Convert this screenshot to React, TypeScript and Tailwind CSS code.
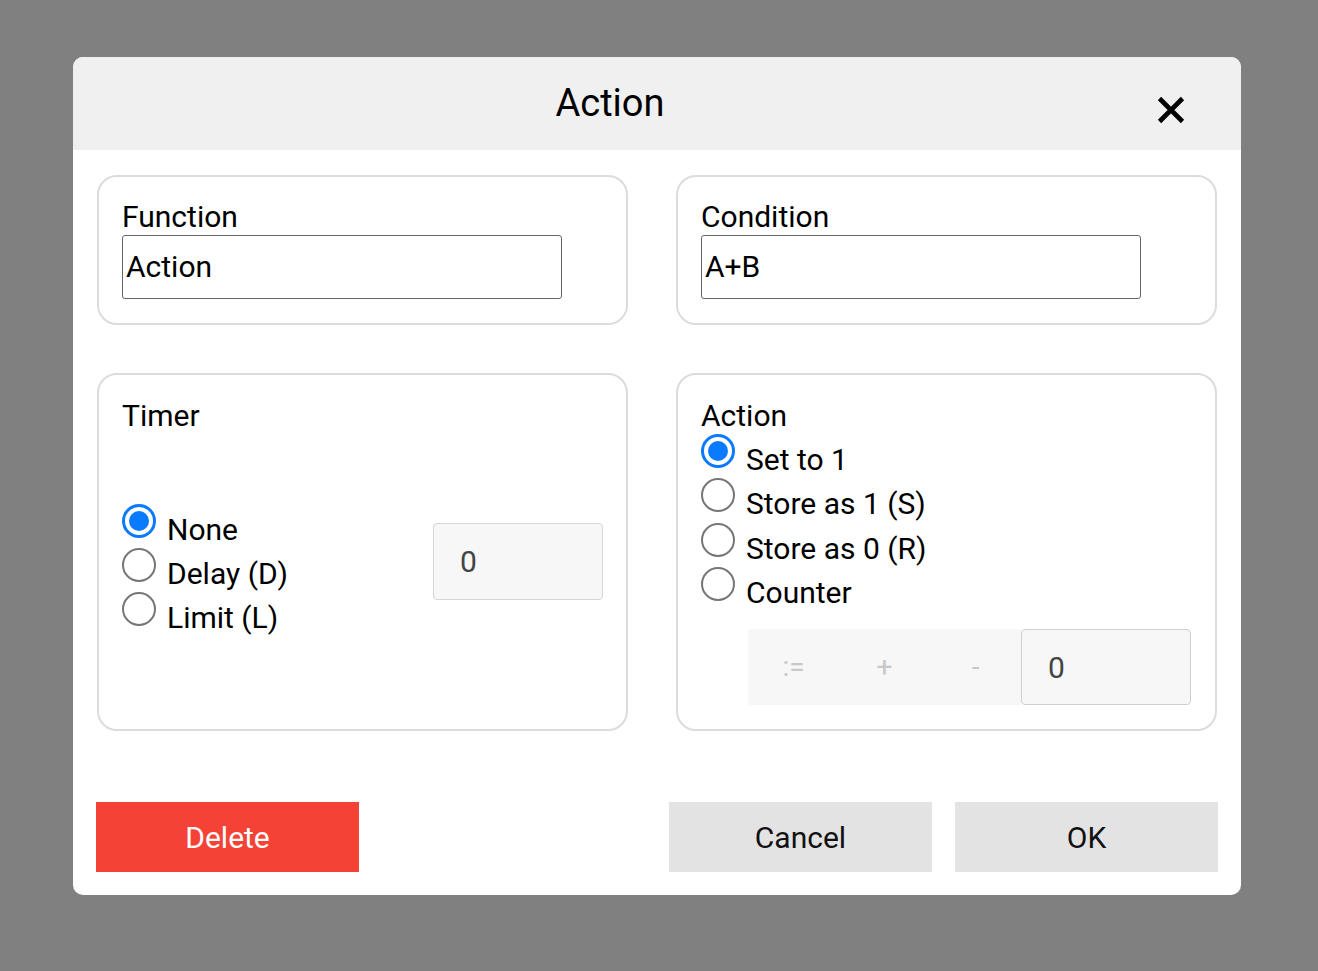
import React from 'react'

function Radio({ checked }: { checked?: boolean }) {
  if (checked) {
    return (
      <span className="w-[34px] h-[34px] rounded-full border-[3px] border-[#0a7aff] bg-white flex items-center justify-center shrink-0">
        <span className="w-[20px] h-[20px] rounded-full bg-[#0a7aff]" />
      </span>
    )
  }
  return <span className="w-[34px] h-[34px] rounded-full border-2 border-[#767676] bg-white shrink-0" />
}

function Option({ label, checked }: { label: string; checked?: boolean }) {
  return (
    <div className="flex items-start h-[44.3px]">
      <Radio checked={checked} />
      <span className="ml-[11px] pt-[8px] text-[30px] leading-[36px] text-black whitespace-nowrap">{label}</span>
    </div>
  )
}

function TextField({ label, value }: { label: string; value: string }) {
  return (
    <div className="h-[150px] border-2 border-[#dcdcdc] rounded-[20px] pt-[22px] pl-[23px]">
      <div className="text-[30px] leading-[36px] text-black">{label}</div>
      <div className="w-[440px] h-[64px] border-[1.5px] border-[#666666] rounded-[3px] flex items-center pl-[3px] text-[30px] leading-[36px] text-black">
        {value}
      </div>
    </div>
  )
}

export default function App() {
  return (
    <div className="min-h-screen bg-[#808080] pl-[73px] pt-[57px] font-['Roboto',sans-serif]">
      <div className="w-[1168px] h-[838px] bg-white rounded-[10px] overflow-hidden flex flex-col">
        {/* Header */}
        <div className="h-[93px] bg-[#f0f0f0] flex items-center shrink-0">
          <div className="w-[1074px] text-center text-[38px] leading-[44px] text-black -mt-[2px]">Action</div>
          <button className="ml-[10px] mt-[12px] w-[28px] h-[28px]">
            <svg viewBox="0 0 28 28" width="28" height="28">
              <path d="M2.5 2.5 L25.5 25.5 M25.5 2.5 L2.5 25.5" stroke="#000" strokeWidth="4.6" strokeLinecap="butt" />
            </svg>
          </button>
        </div>

        {/* Body */}
        <div className="px-[24px] pt-[25px] grid grid-cols-[531px_541px] gap-x-[48px] gap-y-[48px]">
          <TextField label="Function" value="Action" />
          <TextField label="Condition" value="A+B" />

          {/* Timer */}
          <div className="h-[358px] border-2 border-[#dcdcdc] rounded-[20px] pl-[23px] pr-[23px] pt-[23px] pb-[23px] flex flex-col">
            <div className="text-[30px] leading-[36px] text-black">Timer</div>
            <div className="flex-1 flex items-center justify-between">
              <div className="flex flex-col">
                <Option label="None" checked />
                <Option label="Delay (D)" />
                <Option label="Limit (L)" />
              </div>
              <div className="mb-[18px] w-[170px] h-[77px] bg-[#f7f7f7] border-[1.5px] border-[#d6d6d6] rounded-[4px] flex items-center pl-[26px] text-[30px] text-[#444444]">
                0
              </div>
            </div>
          </div>

          {/* Action */}
          <div className="h-[358px] border-2 border-[#dcdcdc] rounded-[20px] pl-[23px] pr-[24px] pt-[23px] flex flex-col">
            <div className="text-[30px] leading-[36px] text-black">Action</div>
            <Option label="Set to 1" checked />
            <Option label="Store as 1 (S)" />
            <Option label="Store as 0 (R)" />
            <Option label="Counter" />
            <div className="mt-[18px] ml-[47px] flex h-[76px]">
              <div className="flex bg-[#f7f7f7] w-[273px]">
                {[':=', '+', '-'].map(s => (
                  <div key={s} className="w-[91px] flex items-center justify-center text-[28px] text-[#c8c8c8]">
                    {s}
                  </div>
                ))}
              </div>
              <div className="w-[170px] h-[76px] bg-[#f7f7f7] border-[1.5px] border-[#cfcfcf] rounded-[4px] flex items-center pl-[26px] text-[30px] text-[#444444]">
                0
              </div>
            </div>
          </div>
        </div>

        {/* Footer buttons */}
        <div className="mt-[71px] px-[23px] flex">
          <button className="w-[263px] h-[70px] bg-[#f44336] text-white text-[30px]">Delete</button>
          <div className="ml-auto flex gap-[23px]">
            <button className="w-[263px] h-[70px] bg-[#e3e3e3] text-[#111111] text-[30px]">Cancel</button>
            <button className="w-[263px] h-[70px] bg-[#e3e3e3] text-[#111111] text-[30px]">OK</button>
          </div>
        </div>
      </div>
    </div>
  )
}
